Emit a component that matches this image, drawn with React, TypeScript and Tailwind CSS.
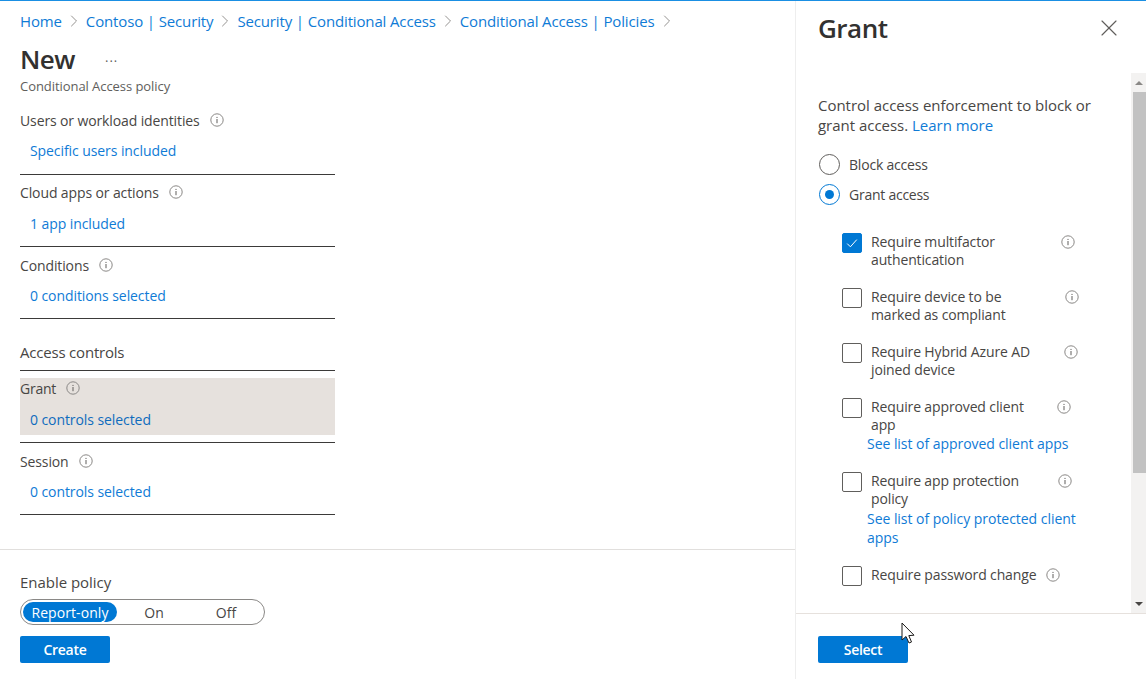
import { ChevronRight, X } from 'lucide-react'

const font = "font-['Open_Sans','Noto_Sans',sans-serif]"

function InfoIcon({ className = '' }: { className?: string }) {
  return (
    <svg viewBox="0 0 14 14" className={`h-[14px] w-[14px] shrink-0 ${className}`} fill="none" aria-hidden="true">
      <circle cx="7" cy="7" r="6.2" stroke="#8a8886" strokeWidth="1" />
      <rect x="6.5" y="6" width="1" height="4.2" fill="#605e5c" />
      <rect x="6.5" y="3.9" width="1" height="1.1" fill="#605e5c" />
    </svg>
  )
}

function PolicySection({
  label,
  link,
  labelClass = 'h-[30px]',
  linkClass = 'h-[31px]',
  gapClass = 'mt-[8px]',
}: {
  label: string
  link: string
  labelClass?: string
  linkClass?: string
  gapClass?: string
}) {
  return (
    <div className="h-[72px] w-[315px]">
      <div className={`flex items-center gap-[10px] text-[14px] tracking-[-0.12px] text-[#484644] ${labelClass}`}>
        {label}
        <InfoIcon />
      </div>
      <div className={`flex items-center pl-[10px] text-[14px] tracking-[-0.08px] text-[#0f7bd6] ${linkClass}`}>{link}</div>
      <div className={`border-b border-[#3b3a39] ${gapClass}`} />
    </div>
  )
}

function GrantOption({
  lines,
  textClass,
  links,
  checked = false,
  rowClass,
  linkClass = '',
}: {
  lines: string[]
  textClass: string
  links?: string[]
  checked?: boolean
  rowClass: string
  linkClass?: string
}) {
  return (
    <div className={`ml-[24px] ${rowClass}`}>
      <div className="flex items-start">
        <div
          className={`mr-[9px] flex h-[20px] w-[20px] shrink-0 items-center justify-center rounded-[2px] border ${
            checked ? 'border-[#0078d4] bg-[#0078d4]' : 'border-[#605e5c] bg-white'
          }`}
        >
          {checked && (
            <svg viewBox="0 0 14 14" className="h-[14px] w-[14px]" fill="none">
              <path d="M2.2 7.6 L5.4 10.8 L11.8 3.6" stroke="#ffffff" strokeWidth="1" />
            </svg>
          )}
        </div>
        <div className={`${textClass} text-[14px] leading-[18px] tracking-[-0.13px] text-[#484644]`}>
          {lines.map((line) => (
            <div key={line}>{line}</div>
          ))}
        </div>
        <InfoIcon className="mt-[2px]" />
      </div>
      {links && (
        <div className={`ml-[25px] text-[14px] leading-[19px] tracking-[-0.04px] text-[#0f7bd6] ${linkClass}`}>
          {links.map((line) => (
            <div key={line}>{line}</div>
          ))}
        </div>
      )}
    </div>
  )
}

export default function App() {
  const crumbs = ['Home', 'Contoso | Security', 'Security | Conditional Access', 'Conditional Access | Policies']

  return (
    <div className={`relative flex h-[679px] w-[1146px] flex-col overflow-hidden bg-white ${font}`}>
      <div className="h-px bg-[#1a8fe3]" />
      <div className="flex min-h-0 flex-1">
        <div className="flex w-[795px] shrink-0 flex-col">
          <div className="flex-1 pl-[20px]">
            <div className="flex h-[40px] items-center text-[15px] tracking-[-0.14px] text-[#0f7bd6]">
              {crumbs.map((crumb) => (
                <div key={crumb} className="flex items-center">
                  {crumb}
                  <ChevronRight className="mx-[2px] h-[20px] w-[20px] text-[#8a8886]" strokeWidth={1.1} />
                </div>
              ))}
            </div>
            <div className="flex h-[36px] items-center">
              <div className="w-[85px] text-[26px] font-semibold tracking-[-0.5px] text-[#323130]">New</div>
              <div className="pb-[4px] text-[13px] leading-none tracking-[1px] text-[#605e5c]">...</div>
            </div>
            <div className="flex h-[18px] items-center pt-[1px] text-[13px] tracking-[-0.06px] text-[#605e5c]">
              Conditional Access policy
            </div>
            <div className="h-[10px]" />
            <PolicySection label="Users or workload identities" link="Specific users included" />
            <PolicySection label="Cloud apps or actions" link="1 app included" linkClass="h-[33px]" gapClass="mt-[6px]" />
            <PolicySection label="Conditions" link="0 conditions selected" labelClass="h-[32px]" linkClass="h-[29px]" gapClass="mt-[8px]" />
            <div className="h-[14px]" />
            <div className="flex h-[36px] w-[315px] items-center border-b border-[#3b3a39] pb-[1px] text-[15px] tracking-[-0.2px] text-[#484644]">
              Access controls
            </div>
            <div className="mt-[7px] h-[65px] w-[315px]">
              <div className="h-[57px] bg-[#e6e1dd]">
                <div className="flex h-[20px] items-center gap-[10px] text-[14px] tracking-[-0.25px] text-[#484644]">
                  Grant
                  <InfoIcon />
                </div>
                <div className="flex h-[37px] items-center pl-[10px] pt-[5px] text-[14px] tracking-[-0.08px] text-[#0f6cbd]">
                  0 controls selected
                </div>
              </div>
              <div className="mt-[7px] border-b border-[#3b3a39]" />
            </div>
            <div className="h-[3px]" />
            <PolicySection label="Session" link="0 controls selected" gapClass="mt-[7px]" />
          </div>
          <div className="h-[130px] border-t border-[#e1dfdd] pl-[20px]">
            <div className="flex h-[44px] items-end pb-[1px] text-[15px] tracking-[-0.03px] text-[#484644]">Enable policy</div>
            <div className="mt-[5px] flex h-[26px] w-[245px] items-center rounded-full border border-[#8a8886] pl-[2px] text-[14px] tracking-[0.08px] text-[#484644]">
              <div className="flex h-[20px] w-[94px] items-center justify-center rounded-full bg-[#0078d4] text-white">Report-only</div>
              <div className="w-[74px] text-center">On</div>
              <div className="w-[70px] text-center">Off</div>
            </div>
            <div className="mt-[11px] flex h-[27px] w-[90px] items-center justify-center rounded-[2px] bg-[#0078d4] text-[14px] font-semibold tracking-[-0.3px] text-white">
              Create
            </div>
          </div>
        </div>

        <div className="flex min-w-0 flex-1 flex-col border-l border-[#eeeeee]">
          <div className="flex h-[72px] shrink-0 justify-between pl-[22px] pr-[23px]">
            <div className="mt-[8px] text-[26px] font-semibold leading-[38px] tracking-[-0.5px] text-[#323130]">Grant</div>
            <X className="mt-[13px] h-[28px] w-[28px] text-[#605e5c]" strokeWidth={1} />
          </div>
          <div className="flex min-h-0 flex-1 border-b border-[#e6e1dd]">
            <div className="min-w-0 flex-1 pl-[22px] pt-[22px]">
              <div className="w-[290px] text-[15px] leading-[20px] tracking-[-0.02px] text-[#484644]">
                Control access enforcement to block or grant access. <span className="text-[#0f7bd6]">Learn more</span>
              </div>
              <div className="mt-[14px] flex h-[30px] items-center">
                <div className="ml-[1px] mr-[9px] h-[21px] w-[21px] rounded-full border border-[#605e5c]" />
                <span className="text-[14px] tracking-[-0.2px] text-[#484644]">Block access</span>
              </div>
              <div className="flex h-[30px] items-center">
                <div className="ml-[1px] mr-[9px] flex h-[21px] w-[21px] items-center justify-center rounded-full border border-[#0078d4]">
                  <div className="h-[9px] w-[9px] rounded-full bg-[#0078d4]" />
                </div>
                <span className="text-[14px] tracking-[-0.25px] text-[#484644]">Grant access</span>
              </div>
              <div className="h-[24px]" />
              <GrantOption checked lines={['Require multifactor', 'authentication']} textClass="w-[190px]" rowClass="h-[55px]" />
              <GrantOption lines={['Require device to be', 'marked as compliant']} textClass="w-[194px]" rowClass="h-[55px]" />
              <GrantOption lines={['Require Hybrid Azure AD', 'joined device']} textClass="w-[193px]" rowClass="h-[55px]" />
              <GrantOption
                lines={['Require approved client', 'app']}
                textClass="w-[186px]"
                links={['See list of approved client apps']}
                rowClass="h-[74px]"
              />
              <GrantOption
                lines={['Require app protection', 'policy']}
                textClass="w-[187px]"
                links={['See list of policy protected client', 'apps']}
                linkClass="pt-[1px]"
                rowClass="h-[94px]"
              />
              <GrantOption lines={['Require password change']} textClass="w-[175px]" rowClass="h-[30px]" />
            </div>
            <div className="flex w-[15px] shrink-0 flex-col items-center bg-[#f3f2f1]">
              <div className="flex h-[19px] w-full items-center justify-center">
                <div className="h-0 w-0 border-x-[4px] border-b-[4px] border-x-transparent border-b-[#8a8886]" />
              </div>
              <div className="ml-[2px] h-[381px] w-[13px] bg-[#c2c2c2]" />
              <div className="flex-1" />
              <div className="flex h-[19px] w-full items-center justify-center">
                <div className="h-0 w-0 border-x-[4px] border-t-[4px] border-x-transparent border-t-[#484644]" />
              </div>
            </div>
          </div>
          <div className="h-[65px] shrink-0 pl-[22px] pt-[22px]">
            <div className="flex h-[27px] w-[90px] items-center justify-center rounded-[2px] bg-[#0078d4] text-[14px] font-semibold tracking-[-0.3px] text-white">
              Select
            </div>
          </div>
        </div>
      </div>

      <svg viewBox="0 0 16 24" className="absolute left-[901px] top-[622px] h-[24px] w-[16px]">
        <path
          d="M1 1 L1 18 L5 14.5 L8 21 L10.5 20 L7.8 13.6 L13 13.2 Z"
          fill="#ffffff"
          stroke="#1b1a19"
          strokeWidth="1"
          strokeLinejoin="round"
        />
      </svg>
    </div>
  )
}
